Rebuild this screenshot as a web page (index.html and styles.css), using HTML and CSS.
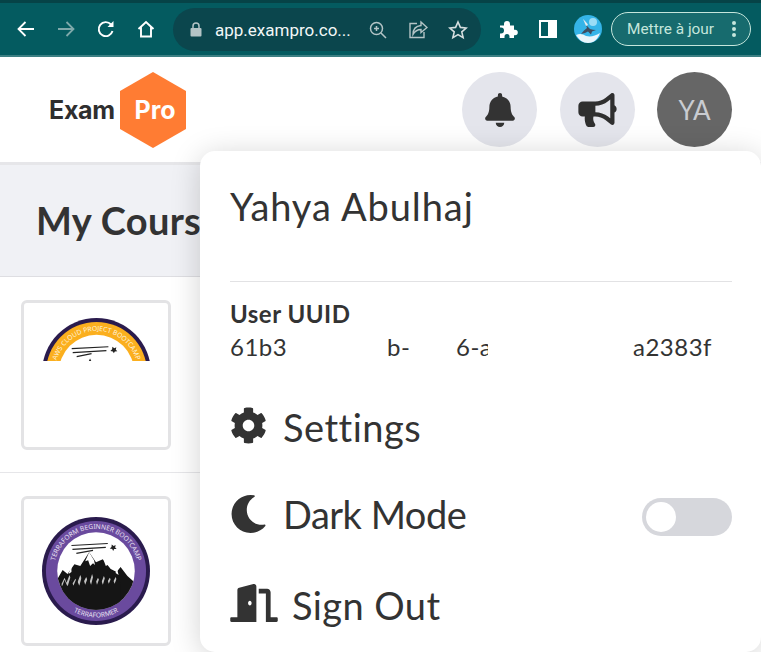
FILE: index.html
```html
<!DOCTYPE html>
<html lang="en">
<head>
<meta charset="utf-8">
<title>ExamPro</title>
<link rel="stylesheet" href="styles.css">
</head>
<body>
<div class="tabstrip"></div>
<div class="toolbar">
  <svg class="tb-icon" width="20" height="20" viewBox="0 0 20 20" fill="none" stroke="#fff" stroke-width="1.800"><path d="M18 10H2.500M9.500 3 2.500 10l7 7"/></svg>
  <svg class="tb-icon" width="20" height="20" viewBox="0 0 20 20" fill="none" stroke="#7fa9ab" stroke-width="1.800"><path d="M2 10h15.500M10.500 3l7 7-7 7"/></svg>
  <svg class="tb-icon" width="20" height="20" viewBox="0 0 20 20" fill="none" stroke="#fff" stroke-width="1.900"><path d="M16.500 12a7 7 0 1 1-1.500-6.500"/><path d="M17.500 2v6h-6z" fill="#fff" stroke="none"/></svg>
  <svg class="tb-icon" width="20" height="20" viewBox="0 0 20 20" fill="none" stroke="#fff" stroke-width="1.900"><path d="M2.500 10 10 3l7.500 7M5 8v9.500h10V8"/></svg>
  <div class="omnibox">
    <svg width="12" height="15" viewBox="0 0 12 15"><path d="M3 6V4a3 3 0 0 1 6 0v2" fill="none" stroke="#b4c4c6" stroke-width="1.500"/><rect x="0.500" y="6" width="11" height="8.500" rx="1" fill="#b4c4c6"/></svg>
    <span class="url">app.exampro.co...</span>
    <svg class="zoom" width="20" height="20" viewBox="0 0 20 20" fill="none" stroke="#b4c4c6" stroke-width="1.500"><circle cx="8.500" cy="8.500" r="6"/><path d="m13 13 5 5M6 8.500h5M8.500 6v5"/></svg>
    <svg class="share" width="20" height="20" viewBox="0 0 20 20" fill="none" stroke="#b4c4c6" stroke-width="1.400"><path d="M9 3.500H2v14h14V12"/><path d="M13 2l6 5.500-6 5V9.500c-4 0-6 1.500-8 5 0-5 3-8.500 8-9z"/></svg>
    <svg class="star" width="20" height="20" viewBox="0 0 20 20" fill="none" stroke="#d6dfe0" stroke-width="1.600"><path d="m10 2 2.400 5.400 5.800.6-4.400 3.900 1.300 5.700-5.100-3-5.100 3 1.300-5.700L1.800 8l5.800-.6z"/></svg>
  </div>
  <svg class="puzzle" width="19" height="19" viewBox="0 0 19 19" fill="#fff"><path d="M1 5.500h4V4a3 3 0 0 1 6 0v1.500h4v4.200h1a2.800 2.800 0 0 1 0 5.600h-1V18H10.500v-1.500a2.500 2.500 0 0 0-5 0V18H1v-4.500h1a3 3 0 0 0 0-6H1z"/></svg>
  <div class="sidepanel"></div>
  <svg class="avatar-img" width="28" height="28" viewBox="0 0 28 28"><circle cx="14" cy="14" r="14" fill="#35b4e8"/><circle cx="19" cy="7" r="4" fill="#9adcf6"/><path d="M2 20c4-2 7-1 10 1 5 1 9 0 14-3-2 6-6 10-12 10-5 0-9-3-12-8z" fill="#eaf6fb"/><path d="M10 5c1 4 3 6 4 7l2 2c2 .5 4 1 6 1l-4 1.500-1 3-3-3-3 1.500-4 1 3-3.500 3-2.500z" fill="#3d4d60"/><path d="M9 4c2 2 4 4 5 6l-2 1z" fill="#e8eef2"/></svg>
  <div class="update">
    <span>Mettre à jour</span>
    <svg width="4" height="16" viewBox="0 0 4 16" fill="#c5e6dc"><circle cx="2" cy="2" r="2"/><circle cx="2" cy="8" r="2"/><circle cx="2" cy="14" r="2"/></svg>
  </div>
</div>
<div class="page">
  <header class="topbar">
    <div class="logo">
      <span class="logo-word">Exam</span>
      <div class="logo-hex">
        <svg width="66" height="76" viewBox="0 0 66 76"><path d="M33 0 66 19v38L33 76 0 57V19z" fill="#ff7c33"/></svg>
        <span class="logo-pro">Pro</span>
      </div>
    </div>
    <div class="actions">
      <button class="round" type="button" aria-label="Notifications"><svg width="30" height="34" viewBox="0 0 448 512" fill="#333"><path d="M224 512c35.320 0 63.970-28.650 63.970-64H160.030c0 35.350 28.650 64 63.970 64zm215.390-149.710c-19.320-20.760-55.470-51.990-55.470-154.290 0-77.700-54.480-139.900-127.940-155.160V32c0-17.670-14.320-32-31.980-32s-31.980 14.330-31.980 32v20.840C118.560 68.100 64.080 130.300 64.080 208c0 102.300-36.150 133.530-55.470 154.290-6 6.450-8.660 14.160-8.610 21.710.11 16.400 12.980 32 32.100 32h383.800c19.120 0 32-15.600 32.100-32 .05-7.550-2.610-15.270-8.610-21.710z"/></svg></button>
      <button class="round" type="button" aria-label="Announcements"><svg width="39" height="34" viewBox="0 0 576 512" fill="#2f2f2f"><path d="M576 240c0-23.630-12.950-44.040-32-55.120V32.010C544 23.260 537.020 0 512 0c-7.120 0-14.190 2.380-19.980 7.020l-85.030 68.030C364.280 109.190 310.660 128 256 128H64c-35.350 0-64 28.650-64 64v96c0 35.350 28.650 64 64 64h33.700c-1.390 10.480-2.180 21.140-2.180 32 0 39.770 9.260 77.350 25.560 110.940 5.190 10.690 16.520 17.060 28.400 17.060h74.280c26.050 0 41.690-29.840 25.900-50.560-16.400-21.520-26.150-48.360-26.150-77.440 0-11.110 1.620-21.790 4.410-32H256c54.660 0 108.280 18.810 150.980 52.950l85.030 68.030a32.023 32.023 0 0 0 19.980 7.020c24.920 0 32-22.780 32-32V295.130C563.05 284.040 576 263.630 576 240zm-96 141.420l-33.050-26.440C392.950 311.780 325.120 288 256 288v-96c69.120 0 136.950-23.780 190.950-66.980L480 98.580v282.840z"/></svg></button>
      <div class="round avatar">YA</div>
    </div>
  </header>
  <div class="content">
    <section class="title-band"><h1>My Courses</h1></section>
    <section class="course-row">
      <div class="thumb thumb-cut">
        <svg width="109" height="43" viewBox="0 0 110 43.400">
          <defs><path id="arcA" d="M13 55A42 42 0 0 1 97 55"/></defs>
          <circle cx="55" cy="55" r="55" fill="#2a1b4d"/>
          <circle cx="55" cy="55" r="51" fill="#fbaf1e"/>
          <circle cx="55" cy="55" r="38" fill="#fff"/>
          <text class="arc-text orange"><textPath href="#arcA" startOffset="50%" text-anchor="middle">AWS CLOUD PROJECT BOOTCAMP</textPath></text>
          <path d="M30 31 67 29M31 35 65 33M35 39 50 36" stroke="#222" stroke-width="1.200" fill="none"/>
          <path d="m71 29 2 1.500 2-1-.5 2.500 1.500 1.500-2.500.2-1 2-1-2-2.500-.5 1.800-1.700z" fill="#222"/>
          <path d="m47 44 1.500-3 1.500 3z" fill="#222"/>
        </svg>
      </div>
    </section>
    <section class="course-row">
      <div class="thumb">
        <svg width="108" height="108" viewBox="0 0 110 110">
          <defs>
            <path id="arcB" d="M12 55A43 43 0 0 1 98 55"/>
            <path id="arcC" d="M15 80A47 47 0 0 0 95 80"/>
            <clipPath id="inner"><circle cx="55" cy="55" r="39.500"/></clipPath>
          </defs>
          <circle cx="55" cy="55" r="55" fill="#2a1b4d"/>
          <circle cx="55" cy="55" r="51" fill="#6a4a9e"/>
          <circle cx="55" cy="55" r="39.500" fill="#fff"/>
          <g clip-path="url(#inner)">
            <path d="M14 66l7-12 5 4 7-10 6 2 9-14 7 10 7-3 8 10 6 3 4-5 7 9 9 8v32H14z" fill="#151515"/>
            <path d="M48 36l-4 9 3-1 2 6 3-3 2 2-1-5zM62 42l3 8 3-2-2-5zM30 50l-3 8 3-2zM76 51l-1 6 3 2z" fill="#fff"/>
            <path d="M20 68l3-6 2 5 3-8 3 9 3-5 2 4 3-8 3 8 3-6 3 7 3-10 3 10 3-6 3 6 3-8 3 7 3-5 3 5 3-6 3 7v2H20z" fill="#fff" opacity=".75"/>
            <path d="M20 72l3-8 3 7 3-10 3 9 3-7 3 7 3-11 3 10 3-8 3 8 3-12 3 12 3-8 3 8 3-10 3 9 3-7 3 7 3-8 3 8v30H20z" fill="#151515"/>
          </g>
          <path d="M30 29 67 27M31 33 65 31M35 37 52 34" stroke="#222" stroke-width="1.200" fill="none"/>
          <path d="m71 28 2 1.500 2-1-.5 2.500 1.500 1.500-2.500.2-1 2-1-2-2.500-.5 1.800-1.700z" fill="#222"/>
          <text class="arc-text"><textPath href="#arcB" startOffset="50%" text-anchor="middle">TERRAFORM BEGINNER BOOTCAMP</textPath></text>
          <text class="arc-text"><textPath href="#arcC" startOffset="50%" text-anchor="middle">TERRAFORMER</textPath></text>
        </svg>
      </div>
    </section>
  </div>
  <aside class="menu">
    <div class="menu-name">Yahya Abulhaj</div>
    <hr class="menu-rule">
    <div class="uuid">
      <div class="uuid-label">User UUID</div>
      <div class="uuid-value"><span class="u1">61b3</span><span class="u2">b-</span><span class="u3"><span class="u3-clip">6-a</span></span><span class="u4">a2383f</span></div>
    </div>
    <div class="menu-item settings">
      <svg width="37" height="37" viewBox="0 0 512 512" fill="#333"><path d="M487.400 315.700l-42.600-24.600c4.300-23.200 4.300-47 0-70.200l42.600-24.600c4.900-2.800 7.100-8.600 5.500-14-11.100-35.600-30-67.800-54.700-94.600-3.800-4.100-10-5.100-14.800-2.300L380.800 110c-17.900-15.400-38.500-27.300-60.800-35.100V25.800c0-5.600-3.900-10.500-9.400-11.700-36.700-8.200-74.300-7.800-109.200 0-5.500 1.200-9.400 6.100-9.400 11.700V75c-22.200 7.900-42.800 19.800-60.800 35.100L88.700 85.500c-4.900-2.800-11-1.900-14.800 2.300-24.700 26.700-43.600 58.900-54.700 94.600-1.700 5.400.6 11.200 5.500 14L67.300 221c-4.300 23.200-4.300 47 0 70.200l-42.600 24.600c-4.900 2.800-7.100 8.600-5.500 14 11.100 35.600 30 67.800 54.700 94.600 3.800 4.100 10 5.100 14.800 2.300l42.600-24.600c17.900 15.400 38.500 27.300 60.800 35.100v49.200c0 5.600 3.900 10.500 9.400 11.700 36.700 8.200 74.300 7.800 109.200 0 5.500-1.200 9.400-6.100 9.400-11.700v-49.200c22.200-7.900 42.800-19.800 60.800-35.100l42.600 24.600c4.900 2.800 11 1.900 14.800-2.300 24.700-26.700 43.600-58.900 54.700-94.600 1.500-5.500-.7-11.300-5.600-14.100zM256 336c-44.100 0-80-35.900-80-80s35.900-80 80-80 80 35.900 80 80-35.900 80-80 80z"/></svg>
      <span class="label-settings">Settings</span>
    </div>
    <div class="menu-item darkmode">
      <svg width="37" height="38" viewBox="27 0 457 512" fill="#333"><path d="M283.211 512c78.962 0 151.079-35.925 198.857-94.792 7.068-8.708-.639-21.430-11.562-19.350-124.203 23.654-238.262-71.576-238.262-196.954 0-72.222 38.662-138.635 101.498-174.394 9.686-5.512 7.250-20.197-3.756-22.230A258.156 258.156 0 0 0 283.211 0c-141.309 0-256 114.511-256 256 0 141.309 114.511 256 256 256z"/></svg>
      <span class="label-dark">Dark Mode</span>
      <div class="toggle"><div class="knob"></div></div>
    </div>
    <div class="menu-item signout">
      <svg width="48" height="38" viewBox="0 0 640 512" fill="#333"><path d="M624 448h-80V113.450C544 86.190 522.470 64 496 64H384v64h96v384h144c8.840 0 16-7.160 16-16v-32c0-8.840-7.160-16-16-16zM312.240 1.010l-192 49.740C105.990 54.440 96 67.700 96 82.920V448H16c-8.840 0-16 7.160-16 16v32c0 8.840 7.160 16 16 16h336V33.180c0-21.580-19.560-37.410-39.760-32.170zM264 288c-13.250 0-24-14.330-24-32 0-17.670 10.750-32 24-32 13.250 0 24 14.330 24 32 0 17.670-10.750 32-24 32z"/></svg>
      <span class="label-signout">Sign Out</span>
    </div>
  </aside>
</div>
</body>
</html>
```
FILE: styles.css
```css
* { box-sizing: border-box; }
html, body { margin: 0; padding: 0; }
body {
  width: 761px;
  height: 652px;
  overflow: hidden;
  background: #fff;
  color: #333;
  font-family: "Lato", "Noto Sans", sans-serif;
}
.tabstrip {
  height: 3px;
  background: #064347;
}
.toolbar {
  height: 52px;
  padding: 5px 0 0 16px;
  background: #045b60;
  display: flex;
  align-items: flex-start;
  position: relative;
}
.tb-icon { margin-top: 11px; margin-right: 20px; flex: none; }
.omnibox {
  margin-left: -3px;
  width: 308px;
  height: 43px;
  border-radius: 22px;
  background: #0b464d;
  display: flex;
  align-items: center;
  padding-left: 17px;
  flex: none;
}
.url {
  margin-left: 13px;
  font: 17px "Roboto", sans-serif;
  color: #f2f7f7;
  width: 138px;
  white-space: nowrap;
}
.zoom { margin-left: 15px; }
.share { margin-left: 20px; }
.star { margin-left: 20px; }
.puzzle { margin-left: 18px; margin-top: 12px; flex: none; }
.sidepanel {
  margin-left: 21px;
  margin-top: 12px;
  width: 18px;
  height: 18px;
  border: 2.500px solid #fff;
  background: linear-gradient(to right, #045b60 50%, #fff 50%);
  flex: none;
}
.avatar-img { margin-left: 17px; margin-top: 7px; flex: none; }
.update {
  margin-left: 9px;
  margin-top: 4px;
  width: 140px;
  height: 34px;
  border: 1px solid #c5e6dc;
  border-radius: 17px;
  background: #176b6e;
  color: #c5e6dc;
  font: 15.400px "Roboto", sans-serif;
  display: flex;
  align-items: center;
  justify-content: space-between;
  padding: 0 14px 0 15px;
  flex: none;
}
.toolbar::after {
  content: "";
  position: absolute;
  left: 0;
  right: 0;
  bottom: -2px;
  height: 2px;
  background: #3c7f83;
}
.page {
  position: relative;
  height: 597px;
  padding-top: 2px;
}
.topbar {
  height: 108px;
  background: #fff;
  border-bottom: 3px solid #e6e6e9;
  display: flex;
  align-items: flex-start;
  justify-content: space-between;
}
.logo {
  display: flex;
  align-items: center;
  margin: 15px 0 0 49px;
}
.logo-word {
  font: 700 25px "Inter", sans-serif;
  color: #2f2f2f;
  letter-spacing: -0.300px;
  width: 71px;
}
.logo-hex {
  position: relative;
  width: 66px;
  height: 76px;
}
.logo-hex svg { display: block; }
.logo-pro {
  position: absolute;
  inset: 0;
  padding-left: 4px;
  display: flex;
  align-items: center;
  justify-content: center;
  font: 700 25px "Inter", sans-serif;
  color: #fff;
}
.actions {
  display: flex;
  gap: 22.500px;
  margin: 15px 29px 0 0;
}
.round {
  width: 75px;
  height: 75px;
  border-radius: 50%;
  border: 0;
  padding: 0;
  background: #e4e5ec;
  display: flex;
  align-items: center;
  justify-content: center;
}
.avatar {
  background: #666;
  color: #c9ccd1;
  font-size: 26px;
}
.content {
  background: #fff;
}
.title-band {
  height: 112px;
  background: #f0f1f5;
  border-bottom: 1px solid #dedee2;
  padding: 33px 0 0 36px;
}
.title-band h1 {
  margin: 0;
  font-size: 38px;
  font-weight: 700;
  letter-spacing: 0.300px;
  line-height: 44px;
  color: #333;
  white-space: nowrap;
}
.course-row {
  height: 196px;
  padding: 23px 0 0 21px;
  border-bottom: 1px solid #e6e6e9;
}
.thumb {
  width: 150px;
  height: 150px;
  border: 3px solid #e3e3e5;
  border-radius: 6px;
  background: #fff;
  display: flex;
  justify-content: center;
  padding-top: 18px;
}
.thumb svg { display: block; }
.thumb-cut { padding-top: 15px; }
.arc-text {
  font: 400 6.800px "Noto Sans", sans-serif;
  fill: #e8e0f2;
}
.arc-text.orange { fill: #fff3dc; }
.menu {
  position: absolute;
  left: 200px;
  top: 96px;
  width: 561px;
  height: 501px;
  background: #fff;
  border-radius: 15px;
  box-shadow: 0 4px 30px rgba(0, 0, 0, 0.18);
  padding: 0 29px 0 30px;
  display: flex;
  flex-direction: column;
}
.menu-name {
  margin-top: 31px;
  font-size: 38px;
  letter-spacing: 0.900px;
  line-height: 48px;
  color: #333;
  white-space: nowrap;
}
.menu-rule {
  margin: 51px 0 0;
  height: 1px;
  border: 0;
  background: #e2e2e4;
}
.uuid { margin-top: 18px; }
.uuid-label {
  font-size: 24px;
  font-weight: 700;
  letter-spacing: 0.500px;
  line-height: 28px;
  color: #333;
}
.uuid-value {
  display: flex;
  margin-top: 4px;
  font-size: 24px;
  letter-spacing: 0.500px;
  line-height: 30px;
  color: #333;
  overflow: hidden;
}
.u1 { width: 157px; }
.u2 { width: 69px; }
.u3 { width: 177px; }
.u3-clip {
  display: block;
  width: 32px;
  overflow: hidden;
  white-space: nowrap;
}
.menu-item {
  display: flex;
  align-items: center;
  font-size: 38px;
  height: 48px;
  color: #333;
  flex: none;
}
.menu-item svg { flex: none; }
.menu-item span { white-space: nowrap; }
.label-settings { letter-spacing: 0.500px; margin-top: 4px; }
.label-dark { letter-spacing: -0.500px; }
.label-signout { letter-spacing: 0.400px; margin-top: 4px; }
.settings { margin-top: 39px; gap: 16px; }
.darkmode { margin-top: 41px; gap: 16px; }
.signout { margin-top: 41px; gap: 14px; }
.toggle {
  margin-left: auto;
  margin-top: 6px;
  width: 90px;
  height: 38px;
  border-radius: 19px;
  background: #d6d7dc;
  padding: 4px;
}
.knob {
  width: 30px;
  height: 30px;
  border-radius: 50%;
  background: #fff;
}
```
